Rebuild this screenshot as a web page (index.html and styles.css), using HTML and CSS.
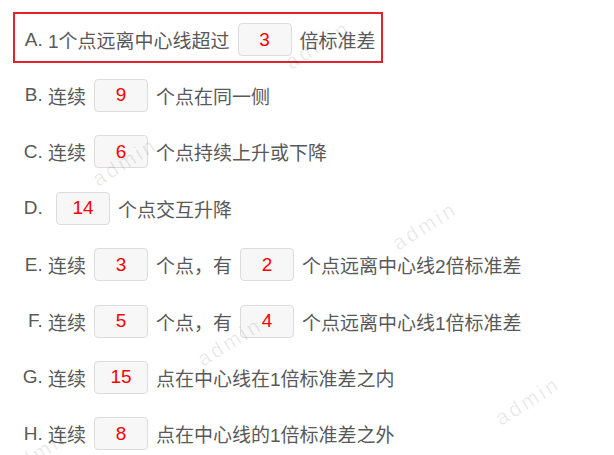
FILE: index.html
```html
<!DOCTYPE html>
<html lang="zh-CN">
<head>
<meta charset="utf-8">
<title>判异规则</title>
<link rel="stylesheet" href="styles.css">
</head>
<body>
<div class="form">
  <div class="row selected">
    <span class="label">A.</span><span class="txt">1个点远离中心线超过</span><span class="num">3</span><span class="txt">倍标准差</span>
  </div>
  <div class="row">
    <span class="label">B.</span><span class="txt">连续</span><span class="num">9</span><span class="txt">个点在同一侧</span>
  </div>
  <div class="row">
    <span class="label">C.</span><span class="txt">连续</span><span class="num">6</span><span class="txt">个点持续上升或下降</span>
  </div>
  <div class="row">
    <span class="label">D.</span><span class="num">14</span><span class="txt">个点交互升降</span>
  </div>
  <div class="row">
    <span class="label">E.</span><span class="txt">连续</span><span class="num">3</span><span class="txt">个点，有</span><span class="num">2</span><span class="txt">个点远离中心线2倍标准差</span>
  </div>
  <div class="row">
    <span class="label">F.</span><span class="txt">连续</span><span class="num">5</span><span class="txt">个点，有</span><span class="num">4</span><span class="txt">个点远离中心线1倍标准差</span>
  </div>
  <div class="row">
    <span class="label">G.</span><span class="txt">连续</span><span class="num">15</span><span class="txt">点在中心线在1倍标准差之内</span>
  </div>
  <div class="row last">
    <span class="label">H.</span><span class="txt">连续</span><span class="num">8</span><span class="txt">点在中心线的1倍标准差之外</span>
  </div>
</div>
<div class="watermarks">
  <span class="wm w1">admin</span>
  <span class="wm w2">admin</span>
  <span class="wm w3">admin</span>
  <span class="wm w4">admin</span>
  <span class="wm w5">admin</span>
  <span class="wm w6">admin</span>
</div>
</body>
</html>
```
FILE: styles.css
```css
html, body {
  margin: 0;
  padding: 0;
  background: #ffffff;
  overflow: hidden;
}
body {
  width: 614px;
  height: 455px;
  position: relative;
  font-family: "Liberation Sans", "Noto Sans CJK SC", sans-serif;
  font-size: 19px;
  color: #595959;
}
.form {
  padding-top: 12px;
  margin-left: 13px;
}
.row {
  box-sizing: border-box;
  display: flex;
  align-items: center;
  height: 56.4px;
  border: 2px solid transparent;
  white-space: nowrap;
}
.row.selected {
  width: 370px;
  height: 51px;
  padding-top: 4px;
  margin-bottom: 4.3px;
  border-color: #e3232c;
}
.row.last {
  height: 49.3px;
  padding-top: 7.1px;
}
.label {
  display: inline-block;
  width: 27.7px;
  margin-right: 5.3px;
  text-align: right;
}
.txt {
  display: inline-block;
}
.num {
  box-sizing: border-box;
  display: inline-flex;
  align-items: center;
  justify-content: center;
  width: 54px;
  height: 33px;
  margin: 0 8px;
  border: 1px solid #dcdcdc;
  border-radius: 4px;
  background: #f7f7f7;
  color: #ff0000;
  font-size: 19px;
}
.watermarks {
  position: absolute;
  left: 0;
  top: 0;
  width: 614px;
  height: 455px;
  overflow: hidden;
  pointer-events: none;
}
.wm {
  position: absolute;
  font-family: "Liberation Sans", sans-serif;
  font-size: 21px;
  letter-spacing: 3px;
  color: rgba(0, 0, 0, 0.09);
  transform: translate(-50%, -50%) rotate(-32deg);
}
.w1 { left: 318px; top: 45px; }
.w2 { left: 125px; top: 162px; }
.w3 { left: 425px; top: 226px; }
.w4 { left: 230px; top: 342px; }
.w5 { left: 528px; top: 401px; }
.w6 { left: 40px; top: 452px; }
```
